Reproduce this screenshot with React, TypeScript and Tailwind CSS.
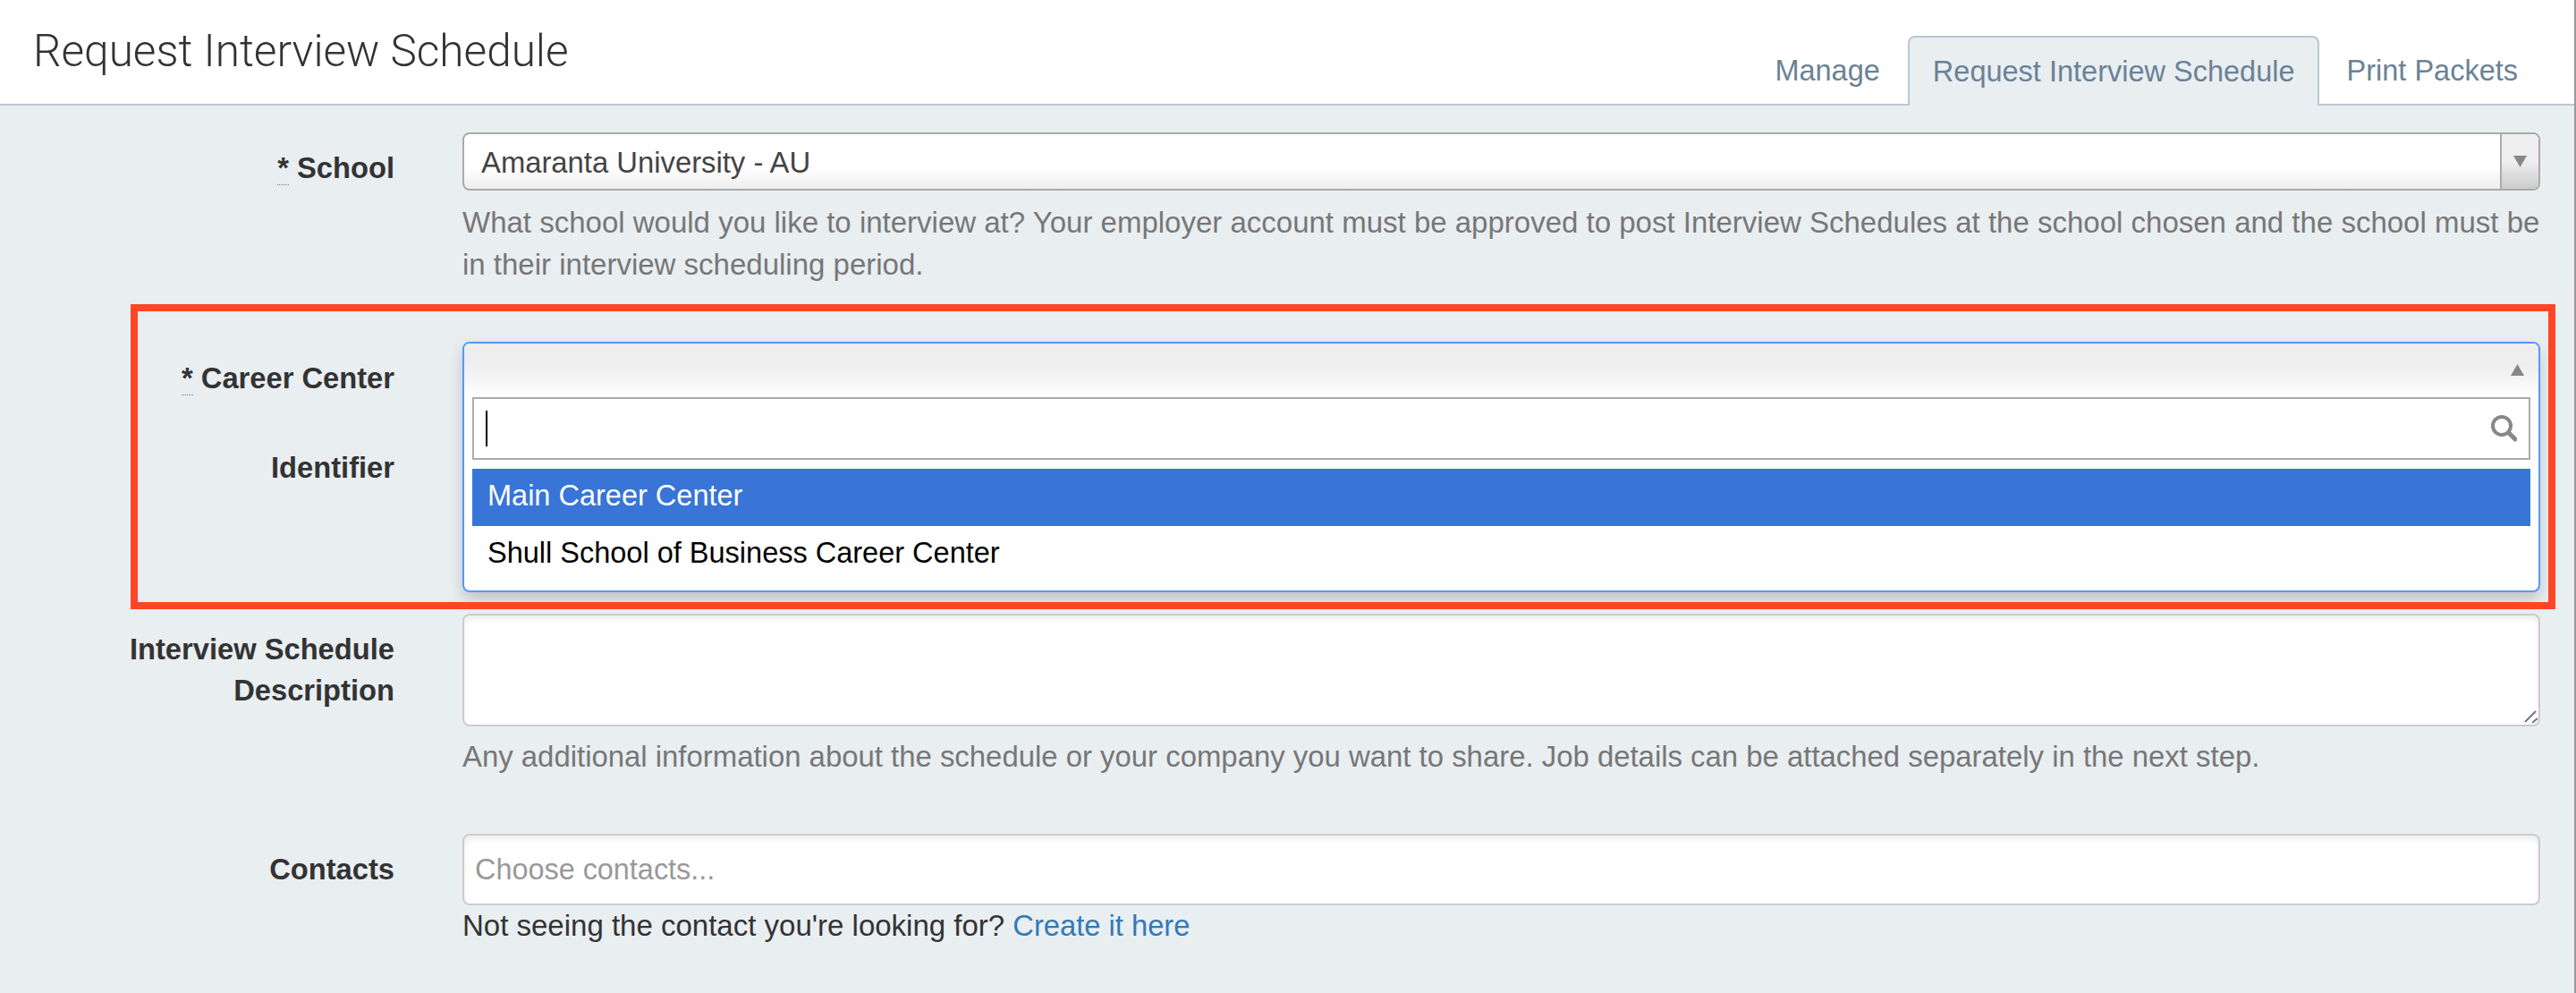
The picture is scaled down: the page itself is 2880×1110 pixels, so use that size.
const Req = () => (
  <span className="relative mr-[9px]">
    *
    <span className="absolute left-0 right-0 top-[37px] border-b border-dotted border-[#777]" />
  </span>
);

const labelCls = "w-[441px] shrink-0 text-right text-[32.7px] leading-[46px] font-bold text-[#333]";

function Row({ label, children }: { label: React.ReactNode; children?: React.ReactNode }) {
  return (
    <div className="flex gap-[76px]">
      <div className={labelCls}>{label}</div>
      <div className="flex-1 min-w-0">{children}</div>
    </div>
  );
}

export default function App() {
  return (
    <div className="relative w-[2880px] h-[1110px] overflow-hidden border-r-2 border-[#9a9a9a] bg-[#e9eef1] font-['Liberation_Sans',Arial,sans-serif] text-[33px] text-[#333]">
      <header className="flex h-[118px] items-end justify-between border-b-2 border-[#b8c7d2] bg-white pl-[37px] pr-[63px]">
        <h1 className="mb-[31px] font-['Roboto',sans-serif] text-[49.5px] leading-[56px] font-light text-[#333]">Request Interview Schedule</h1>
        <nav className="flex items-end -mb-[2px] text-[32.5px] leading-[40px] text-[#6b8296]">
          <a className="h-[78px] pt-[19px] pr-[31px]">Manage</a>
          <a className="h-[78px] rounded-t-[8px] border-2 border-b-0 border-[#b8c7d2] bg-[#e9eef1] pl-[26px] pr-[25px] pt-[18px]">Request Interview Schedule</a>
          <a className="h-[78px] pt-[19px] pl-[31px]">Print Packets</a>
        </nav>
      </header>

      <div className="pt-[30px] pr-[38px]">
        <Row label={<div className="pt-[17px]"><Req />School</div>}>
          <div className="flex h-[65px] overflow-hidden rounded-[8px] border-2 border-[#aaa] bg-gradient-to-b from-white from-60% to-[#eee]">
            <span className="flex-1 pl-[19px] pt-[3px] text-[32.8px] leading-[58px] text-[#444]">Amaranta University - AU</span>
            <span className="flex w-[43px] items-center justify-center border-l-2 border-[#aaa] bg-gradient-to-b from-[#eee] from-50% to-[#ccc]">
              <svg width="15" height="13" viewBox="0 0 15 13"><path d="M0 0h15L7.5 13z" fill="#888" /></svg>
            </span>
          </div>
          <p className="mt-[12px] leading-[47px] text-[#777]">
            What school would you like to interview at? Your employer account must be approved to post Interview Schedules at the school chosen and the school must be in their interview scheduling period.
          </p>
        </Row>

        <div className="mt-[63px] relative">
          <div className="flex gap-[76px] h-[84px]">
            <div className={labelCls + " pt-[18px]"}><Req />Career Center</div>
            <div className="flex-1" />
          </div>
          <div className="flex gap-[76px] h-[216px]">
            <div className={labelCls + " pt-[34px]"}>Identifier</div>
            <div className="flex-1" />
          </div>

          <div className="absolute left-[517px] right-0 top-0 z-10 h-[280px] rounded-[8px] border-2 border-[#5897fb] bg-white text-[32.5px] shadow-[0_8px_16px_rgba(0,0,0,0.18)]">
            <div className="flex h-[60px] items-start justify-end rounded-t-[6px] bg-gradient-to-b from-[#eee] from-40% to-white pr-[16px] pt-[23px]">
              <svg width="15" height="13" viewBox="0 0 15 13"><path d="M7.5 0L15 13H0z" fill="#888" /></svg>
            </div>
            <div className="mx-[9px] flex h-[70px] items-center justify-between border-2 border-[#aaa] bg-white pl-[13px] pr-[13px]">
              <span className="h-[40px] w-[2px] bg-black" />
              <svg width="30" height="30" viewBox="0 0 30 30" fill="none" stroke="#888">
                <circle cx="13" cy="12" r="10" strokeWidth="4" />
                <path d="M21 20l7 7" strokeWidth="5" strokeLinecap="round" />
              </svg>
            </div>
            <div className="mx-[9px] mt-[10px] h-[64px] bg-[#3875d7] pl-[17px] leading-[60px] text-white">Main Career Center</div>
            <div className="mx-[9px] h-[64px] pl-[17px] leading-[60px] text-black">Shull School of Business Career Center</div>
          </div>
        </div>

        <div className="mt-[4px]">
          <Row label={<div className="pt-[17px]">Interview Schedule<br />Description</div>}>
            <div className="relative h-[126px] rounded-[8px] border-2 border-[#ccc] bg-white shadow-[inset_0_4px_6px_rgba(0,0,0,0.08)]">
              <svg width="18" height="18" viewBox="0 0 18 18" className="absolute bottom-0 right-0" stroke="#777" strokeWidth="2"><path d="M15 3L3 15M17 11l-6 5" /></svg>
            </div>
            <p className="mt-[11px] text-[32.9px] leading-[46px] text-[#777]">
              Any additional information about the schedule or your company you want to share. Job details can be attached separately in the next step.
            </p>
          </Row>
        </div>

        <div className="mt-[63px]">
          <Row label={<div className="pt-[17px]">Contacts</div>}>
            <div className="h-[80px] rounded-[8px] border-2 border-[#ccc] bg-white pl-[12px] text-[32.4px] leading-[76px] text-[#999] shadow-[inset_0_4px_6px_rgba(0,0,0,0.08)]">Choose contacts...</div>
            <p className="leading-[46px]">
              Not seeing the contact you're looking for? <a className="text-[32.7px] text-[#337ab7]">Create it here</a>
            </p>
          </Row>
        </div>
      </div>

      <div className="pointer-events-none absolute left-[146px] top-[340px] z-20 h-[341px] w-[2711px] border-[8px] border-[#ff4526]" />
    </div>
  );
}
